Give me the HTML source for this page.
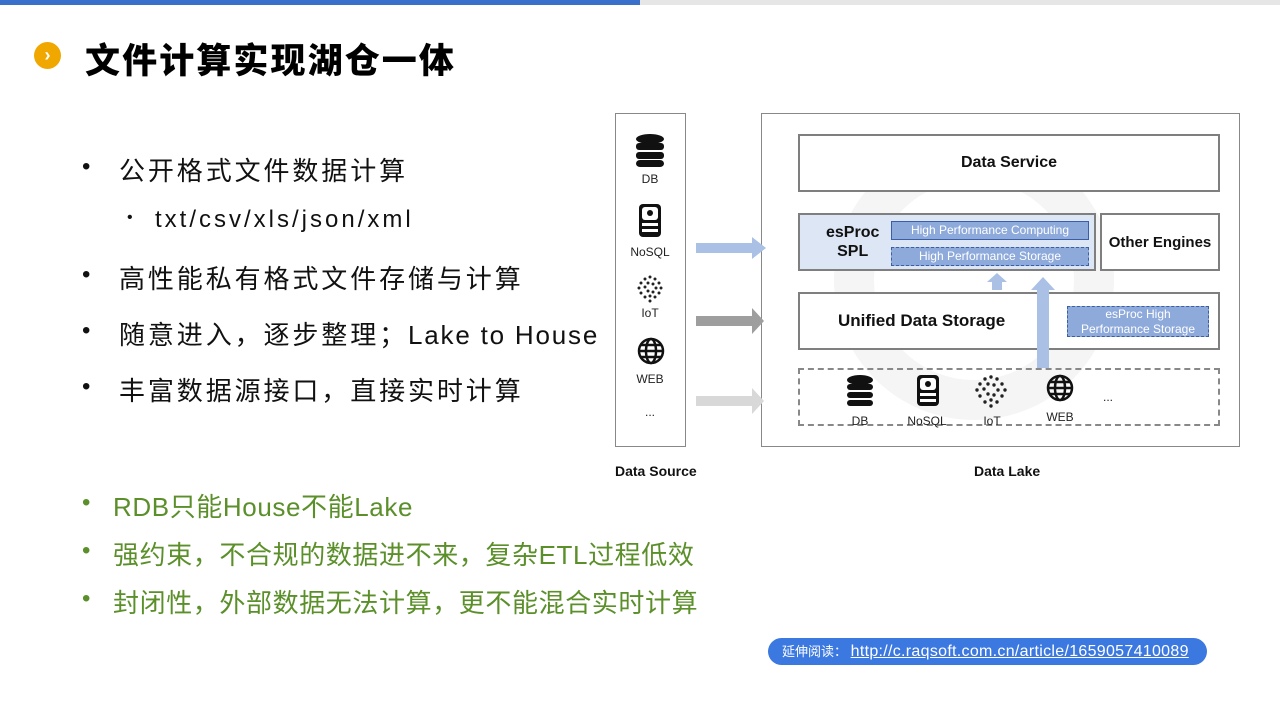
<!DOCTYPE html>
<html><head><meta charset="utf-8"><style>
*{margin:0;padding:0;box-sizing:border-box}
body{width:1280px;height:720px;position:relative;background:#fff;font-family:"Liberation Sans","Noto Sans CJK SC",sans-serif;overflow:hidden;color:#111}
.a{position:absolute}
.bx{position:absolute;border:2px solid #7f7f7f;background:#fff;display:flex;align-items:center;justify-content:center;font-weight:bold;font-size:16px}
.sm{font-size:12px;color:#222;text-align:center;position:absolute}
.b{position:absolute;font-size:26px;color:#111;letter-spacing:2.9px}
.bd{position:absolute;font-size:24px;color:#111;left:82px}
.g{position:absolute;font-size:26px;color:#5b8f2a;left:113px;letter-spacing:0.6px}
.gd{position:absolute;font-size:24px;color:#5b8f2a;left:82px}
</style></head><body>
<div class="a" style="left:0;top:0;width:640px;height:5px;background:#3a6fcb"></div>
<div class="a" style="left:640px;top:0;width:640px;height:5px;background:#e6e6e6"></div>
<div class="a" style="left:34px;top:42px;width:27px;height:27px;border-radius:50%;background:#f0a800;color:#fff;font-weight:bold;font-size:18px;line-height:26px;text-align:center">›</div>
<div class="a" style="left:85px;top:33px;font-size:35px;font-weight:900;color:#000;letter-spacing:2.1px">文件计算实现湖仓一体</div>

<div class="bd" style="top:153px">•</div><div class="b" style="left:119px;top:151px">公开格式文件数据计算</div>
<div class="a" style="left:127px;top:209px;font-size:16px">•</div><div class="a" style="left:155px;top:206px;font-size:24px;letter-spacing:3px">txt/csv/xls/json/xml</div>
<div class="bd" style="top:261px">•</div><div class="b" style="left:119px;top:259px">高性能私有格式文件存储与计算</div>
<div class="bd" style="top:317px">•</div><div class="b" style="left:119px;top:315px">随意进入，逐步整理；<span style="letter-spacing:1.8px">Lake to House</span></div>
<div class="bd" style="top:373px">•</div><div class="b" style="left:119px;top:371px">丰富数据源接口，直接实时计算</div>

<div class="gd" style="top:489px">•</div><div class="g" style="top:487px">RDB只能House不能Lake</div>
<div class="gd" style="top:537px">•</div><div class="g" style="top:535px">强约束，不合规的数据进不来，复杂ETL过程低效</div>
<div class="gd" style="top:585px">•</div><div class="g" style="top:583px">封闭性，外部数据无法计算，更不能混合实时计算</div>

<!-- diagram -->
<div class="a" style="left:615px;top:113px;width:71px;height:334px;border:1px solid #888"></div>
<div class="a" style="left:761px;top:113px;width:479px;height:334px;border:1px solid #888"></div>
<div class="a" style="left:834px;top:140px;width:280px;height:280px;border-radius:50%;border:40px solid #f5f5f5"></div>

<svg class="a" style="left:635px;top:133px" width="30" height="34"><g fill="#111"><ellipse cx="15" cy="6" rx="14" ry="5"/><rect x="1" y="10" width="28" height="7" rx="3"/><rect x="1" y="19" width="28" height="7" rx="3"/><rect x="1" y="27" width="28" height="7" rx="4"/></g></svg>
<div class="sm" style="left:630px;top:172px;width:40px">DB</div>
<svg class="a" style="left:638px;top:203px" width="24" height="35"><rect x="1" y="1" width="22" height="33" rx="4" fill="#111"/><rect x="4" y="4" width="16" height="13" rx="3" fill="#fff"/><circle cx="12" cy="10" r="3" fill="#111"/><rect x="4" y="20" width="16" height="3" fill="#fff"/><rect x="4" y="26" width="16" height="3" fill="#fff"/></svg>
<div class="sm" style="left:626px;top:245px;width:48px">NoSQL</div>
<svg class="a" style="left:636px;top:275px" width="28" height="28"><g fill="#222"><circle cx="14" cy="2" r="1.5"/><circle cx="9" cy="4" r="1.5"/><circle cx="19" cy="4" r="1.5"/><circle cx="5" cy="8" r="1.5"/><circle cx="23" cy="8" r="1.5"/><circle cx="12" cy="8" r="1.5"/><circle cx="17" cy="9" r="1.5"/><circle cx="3" cy="13" r="1.5"/><circle cx="25" cy="13" r="1.5"/><circle cx="9" cy="12" r="1.5"/><circle cx="20" cy="13" r="1.5"/><circle cx="5" cy="18" r="1.5"/><circle cx="23" cy="18" r="1.5"/><circle cx="12" cy="16" r="1.5"/><circle cx="17" cy="17" r="1.5"/><circle cx="9" cy="22" r="1.5"/><circle cx="19" cy="22" r="1.5"/><circle cx="14" cy="21" r="1.5"/><circle cx="14" cy="26" r="1.5"/></g></svg>
<div class="sm" style="left:630px;top:306px;width:40px">IoT</div>
<svg class="a" style="left:637px;top:337px" width="28" height="28"><g fill="none" stroke="#111" stroke-width="2.5"><circle cx="14" cy="14" r="12"/><ellipse cx="14" cy="14" rx="5" ry="12"/><line x1="2" y1="14" x2="26" y2="14"/><line x1="4" y1="8" x2="24" y2="8"/><line x1="4" y1="20" x2="24" y2="20"/></g></svg>
<div class="sm" style="left:630px;top:372px;width:40px">WEB</div>
<div class="sm" style="left:630px;top:405px;width:40px">...</div>

<svg class="a" style="left:694px;top:234px" width="80" height="180">
<path d="M2 9h56v-6l14 11-14 11v-6H2z" fill="#aac0e4"/>
<path d="M2 82h56v-8l12 13-12 13v-8H2z" fill="#9e9e9e"/>
<path d="M2 162h56v-8l12 13-12 13v-8H2z" fill="#d8d8d8"/>
</svg>
<div class="bx" style="left:798px;top:134px;width:422px;height:58px">Data Service</div>
<div class="bx" style="left:798px;top:213px;width:298px;height:58px;background:#dde6f4;justify-content:flex-start;padding-left:26px;line-height:19px;text-align:center">esProc<br>SPL</div>
<div class="a" style="left:891px;top:221px;width:198px;height:19px;background:#8eaadb;border:1px solid #3a5fa8;color:#fff;font-size:12px;text-align:center;line-height:17px">High Performance Computing</div>
<div class="a" style="left:891px;top:247px;width:198px;height:19px;background:#8eaadb;border:1px dashed #3a5fa8;color:#fff;font-size:12px;text-align:center;line-height:17px">High Performance Storage</div>
<div class="bx" style="left:1100px;top:213px;width:120px;height:58px;font-size:15px">Other Engines</div>
<div class="bx" style="left:798px;top:292px;width:422px;height:58px;justify-content:flex-start;padding-left:38px;font-size:17px">Unified Data Storage</div>
<div class="a" style="left:1067px;top:306px;width:142px;height:31px;background:#8eaadb;border:1px dashed #3a5fa8;color:#fff;font-size:12px;text-align:center;line-height:15px">esProc High<br>Performance Storage</div>
<div class="a" style="left:798px;top:368px;width:422px;height:58px;border:2px dashed #888"></div>
<svg class="a" style="left:986px;top:272px" width="70" height="100">
<path d="M6 18v-8h-5l10-9 10 9h-5v8z" fill="#aac0e4"/>
<path d="M51 96v-78h-6l12-13 12 13h-6v78z" fill="#aac0e4"/>
</svg>
<svg class="a" style="left:846px;top:374px" width="28" height="32"><g fill="#111"><ellipse cx="14" cy="6" rx="13" ry="5"/><rect x="1" y="10" width="26" height="6" rx="3"/><rect x="1" y="18" width="26" height="6" rx="3"/><rect x="1" y="26" width="26" height="6" rx="3"/></g></svg>
<div class="sm" style="left:840px;top:414px;width:40px">DB</div>
<svg class="a" style="left:916px;top:374px" width="24" height="33"><rect x="1" y="1" width="22" height="31" rx="4" fill="#111"/><rect x="4" y="4" width="16" height="12" rx="3" fill="#fff"/><circle cx="12" cy="10" r="3" fill="#111"/><rect x="4" y="19" width="16" height="3" fill="#fff"/><rect x="4" y="25" width="16" height="3" fill="#fff"/></svg>
<div class="sm" style="left:903px;top:414px;width:48px">NoSQL</div>
<svg class="a" style="left:974px;top:375px" width="34" height="34"><g fill="#222"><circle cx="17" cy="2" r="1.7"/><circle cx="11" cy="4" r="1.7"/><circle cx="23" cy="4" r="1.7"/><circle cx="6" cy="9" r="1.7"/><circle cx="28" cy="9" r="1.7"/><circle cx="14" cy="9" r="1.7"/><circle cx="20" cy="10" r="1.7"/><circle cx="3" cy="15" r="1.7"/><circle cx="31" cy="15" r="1.7"/><circle cx="10" cy="14" r="1.7"/><circle cx="24" cy="15" r="1.7"/><circle cx="6" cy="21" r="1.7"/><circle cx="28" cy="21" r="1.7"/><circle cx="14" cy="19" r="1.7"/><circle cx="20" cy="20" r="1.7"/><circle cx="11" cy="27" r="1.7"/><circle cx="23" cy="27" r="1.7"/><circle cx="17" cy="25" r="1.7"/><circle cx="17" cy="31" r="1.7"/></g></svg>
<div class="sm" style="left:972px;top:414px;width:40px">IoT</div>
<svg class="a" style="left:1046px;top:374px" width="28" height="28"><g fill="none" stroke="#111" stroke-width="2.5"><circle cx="14" cy="14" r="12"/><ellipse cx="14" cy="14" rx="5" ry="12"/><line x1="2" y1="14" x2="26" y2="14"/><line x1="4" y1="8" x2="24" y2="8"/><line x1="4" y1="20" x2="24" y2="20"/></g></svg>
<div class="sm" style="left:1040px;top:410px;width:40px">WEB</div>
<div class="sm" style="left:1098px;top:390px;width:20px">...</div>
<div class="a" style="left:615px;top:463px;font-size:14px;font-weight:bold;color:#111">Data Source</div>
<div class="a" style="left:974px;top:463px;font-size:14px;font-weight:bold;color:#111">Data Lake</div>

<div class="a" style="left:768px;top:638px;width:439px;height:27px;border-radius:14px;background:#3b78e0;color:#fff;font-size:13px;line-height:27px;padding-left:14px">延伸阅读：&nbsp;<span style="font-family:'Liberation Sans',sans-serif;font-size:16px;letter-spacing:0.3px;text-decoration:underline">http://c.raqsoft.com.cn/article/1659057410089</span></div>
</body></html>
